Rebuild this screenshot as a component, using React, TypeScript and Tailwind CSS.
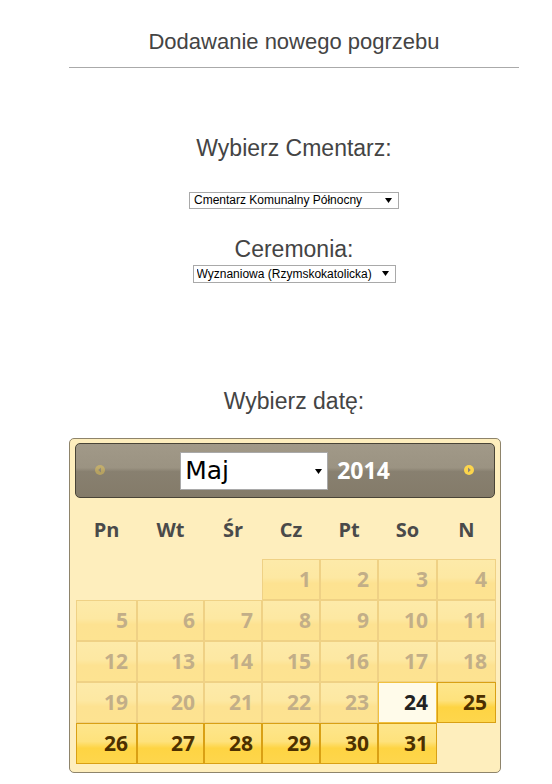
import { useState } from "react";

const weekdays = ["Pn", "Wt", "Śr", "Cz", "Pt", "So", "N"];
const cemeteries = ["Cmentarz Komunalny Północny", "Cmentarz Powązkowski", "Cmentarz Bródnowski"];
const ceremonies = ["Wyznaniowa (Rzymskokatolicka)", "Świecka", "Wyznaniowa (Prawosławna)"];
const months = ["Styczeń", "Luty", "Marzec", "Kwiecień", "Maj", "Czerwiec", "Lipiec", "Sierpień", "Wrzesień", "Październik", "Listopad", "Grudzień"];

const TODAY = 24;

function Arrow({ className }: { className: string }) {
  return (
    <svg width="7" height="5" viewBox="0 0 7 5" className={`pointer-events-none absolute ${className}`}>
      <path d="M0 0h7L3.5 5z" fill="#000" />
    </svg>
  );
}

function NavIcon({ dir, dim }: { dir: "prev" | "next"; dim?: boolean }) {
  return (
    <svg width="12" height="12" viewBox="0 0 12 12" className={dim ? "opacity-40" : ""}>
      <circle cx="6" cy="6" r="5" fill="#fcd54c" />
      {dir === "next" ? <path d="M5 3.5 7.8 6 5 8.5z" fill="#8f8674" /> : <path d="M7 3.5 4.2 6 7 8.5z" fill="#8f8674" />}
    </svg>
  );
}

function DayCell({ day }: { day: number }) {
  let cls = "border-[#efd185] bg-[linear-gradient(#fdeaa9_0%,#fde8a2_45%,#fde291_60%,#fde391_100%)] text-[#c2ae88]";
  if (day === TODAY) cls = "border-[#f1c13f] bg-[#fffbea] text-[#222]";
  else if (day > TODAY) cls = "border-[#d9a014] bg-[linear-gradient(#fee68c_0%,#fee27c_45%,#fed443_62%,#fed64c_100%)] text-[#4c3000]";
  return (
    <div className={`flex h-[41px] items-center justify-end border pr-[8px] text-[21px] font-bold ${cls}`}>
      {day}
    </div>
  );
}

export default function App() {
  const [cemetery, setCemetery] = useState(cemeteries[0]);
  const [ceremony, setCeremony] = useState(ceremonies[0]);
  const [month, setMonth] = useState("Maj");

  // maj 2014 zaczyna się w czwartek
  const cells: (number | null)[] = [null, null, null, ...Array.from({ length: 31 }, (_, i) => i + 1)];

  return (
    <div className="min-h-[784px] w-[552px] bg-white font-['Liberation_Sans',Arial,sans-serif] text-[#444]">
      <div className="ml-[69px] flex w-[450px] flex-col items-center">
        <h1 className="pt-[30px] text-[22px] leading-6">Dodawanie nowego pogrzebu</h1>
        <div className="mt-[13px] h-px w-full bg-[#aaa]" />

        <h2 className="mt-[67px] text-[23px] leading-[26px]">Wybierz Cmentarz:</h2>
        <div className="relative mt-[31px]">
          <select
            value={cemetery}
            onChange={(e) => setCemetery(e.target.value)}
            className="block h-[17px] w-[210px] appearance-none rounded-none border border-[#a9a9a9] bg-white py-0 pl-[4px] text-[12px] leading-[15px] text-black outline-none"
          >
            {cemeteries.map((c) => (
              <option key={c}>{c}</option>
            ))}
          </select>
          <Arrow className="right-[7px] top-[6px]" />
        </div>

        <h2 className="mt-[27px] text-[23px] leading-[26px]">Ceremonia:</h2>
        <div className="relative mt-[3px]">
          <select
            value={ceremony}
            onChange={(e) => setCeremony(e.target.value)}
            className="block h-[18px] w-[203px] appearance-none rounded-none border border-[#a9a9a9] bg-white py-0 pl-[3px] text-[12px] leading-[16px] text-black outline-none"
          >
            {ceremonies.map((c) => (
              <option key={c}>{c}</option>
            ))}
          </select>
          <Arrow className="right-[7px] top-[6px]" />
        </div>

        <h2 className="mt-[105px] text-[23px] leading-[26px]">Wybierz datę:</h2>

        <div className="mt-[24px] w-[432px] self-start rounded-[5px] border border-[#8e846b] bg-[#feeebd] px-[5px] pb-[8px] pt-[4px] font-['Open_Sans',sans-serif]">
          <div className="relative flex h-[55px] items-center justify-center gap-[9px] rounded-[5px] border border-[#494437] bg-[linear-gradient(#a19988_0%,#9b9382_45%,#888070_52%,#847b69_100%)]">
            <button className="absolute left-[18px] top-[20px]">
              <NavIcon dir="prev" dim />
            </button>
            <div className="relative">
              <select
                value={month}
                onChange={(e) => setMonth(e.target.value)}
                className="block h-[38px] w-[148px] appearance-none rounded-none border border-[#a9a9a9] bg-white py-0 pl-[4px] font-['DejaVu_Sans',sans-serif] text-[25px] leading-[36px] text-black outline-none"
              >
                {months.map((m) => (
                  <option key={m}>{m}</option>
                ))}
              </select>
              <Arrow className="right-[6px] top-[17px]" />
            </div>
            <span className="text-[23px] font-bold text-white">2014</span>
            <button className="absolute right-[19px] top-[20px]">
              <NavIcon dir="next" />
            </button>
          </div>

          <div className="ml-px grid grid-cols-[61px_67px_58px_58px_58px_59px_59px]">
            {weekdays.map((d) => (
              <div key={d} className="flex h-[61px] items-center justify-center pt-[3px] text-[20px] font-bold text-[#4a4a4a]">
                {d}
              </div>
            ))}
            {cells.map((d, i) => (d === null ? <div key={i} /> : <DayCell key={i} day={d} />))}
          </div>
        </div>
      </div>
    </div>
  );
}
